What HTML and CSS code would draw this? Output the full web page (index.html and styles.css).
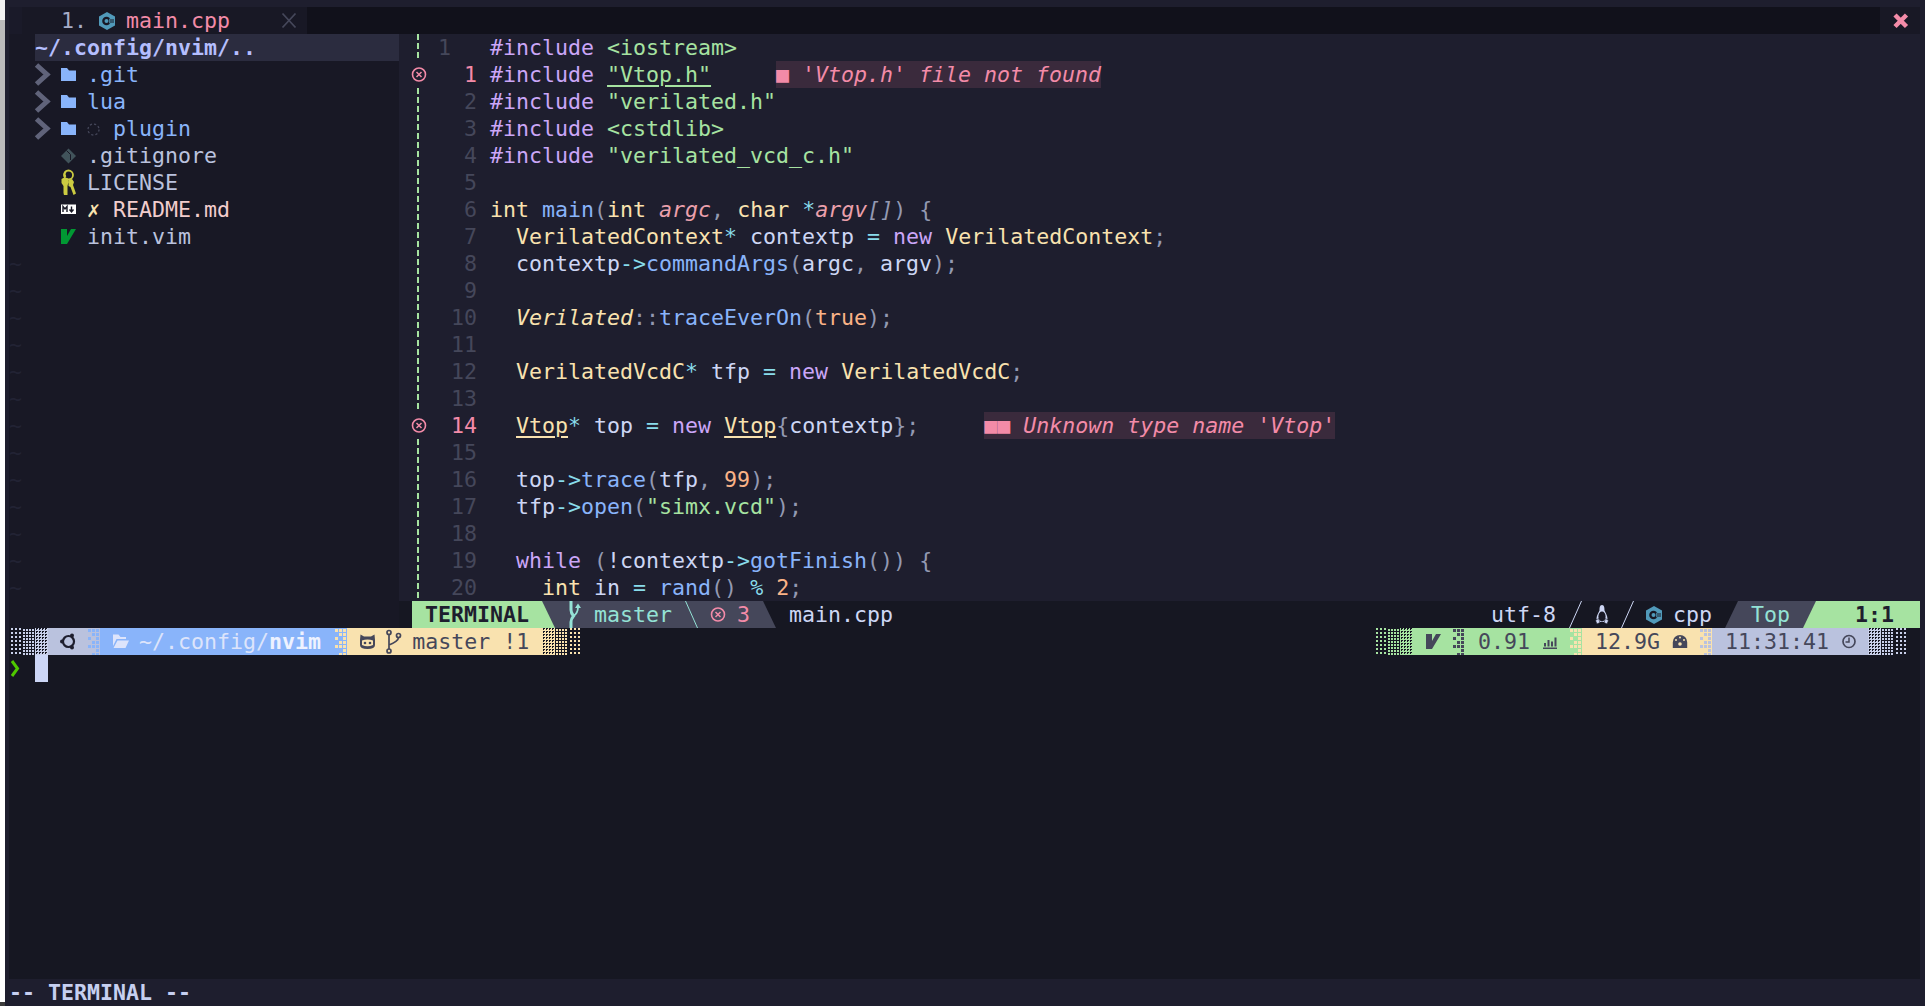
FILE: index.html
```html
<!DOCTYPE html>
<html lang="en">
<head>
<meta charset="utf-8">
<title>nvim</title>
<link rel="stylesheet" href="styles.css">
</head>
<body>
<svg class="defs" aria-hidden="true">
  <symbol id="chev" viewBox="0 0 13 27"><path d="M1.500 4 L12 13.500 L1.500 23" fill="none" stroke="currentColor" stroke-width="5"/></symbol>
  <symbol id="folder" viewBox="0 0 13 27"><path d="M0 7 H6 L8 9.500 H15 V20 H0Z" fill="currentColor"/></symbol>
  <symbol id="folderopen" viewBox="0 0 13 27"><path d="M0 6.500 H5.500 L7.500 9 H13 V11 H3.500 L0 18Z M4.500 12.500 H16 L12.500 20 H0.500Z" fill="currentColor"/></symbol>
  <symbol id="dashc" viewBox="0 0 13 27"><circle cx="6.500" cy="14.500" r="5.500" fill="none" stroke="currentColor" stroke-width="1.300" stroke-dasharray="2.200 2.100"/></symbol>
  <symbol id="gitd" viewBox="0 0 13 27"><path d="M7.500 6.500 L15 14 L7.500 21.500 L0 14Z" fill="currentColor"/><path d="M5.500 8.500 L9.500 12.500 V18" fill="none" stroke="#181825" stroke-width="1"/></symbol>
  <symbol id="keys" viewBox="0 0 13 27"><g fill="none" stroke="currentColor" stroke-width="1.800"><circle cx="7.500" cy="6" r="4.500"/><path d="M4.500 8 Q2.500 5 5 2"/></g><path d="M.500 10 Q3 8 6.500 9 L7.500 13 L6.500 17 V26 H3 L2.500 24 V17 L.500 14Z M7.500 11 L11 10 L13 13 L12 16 L15 24.500 L12.500 26 L9.500 18 L7.500 17Z" fill="currentColor"/></symbol>
  <symbol id="md" viewBox="0 0 13 27"><path d="M0 8.500 H15 V18 H0Z" fill="currentColor"/><path d="M2 16 V10.500 L4 13 L6 10.500 V16 M10.500 10.500 V15 M8.500 13.500 L10.500 16 L12.500 13.500" fill="none" stroke="#181825" stroke-width="1.400"/></symbol>
  <symbol id="vim" viewBox="0 0 13 27"><path d="M0 6 H6 V13 L10 6 H15 L6 21 H0Z" fill="currentColor"/></symbol>
  <symbol id="cpp" viewBox="0 0 13 27"><path d="M7 5 L15 9.500 V18.500 L7 23 L-1 18.500 V9.500Z" fill="currentColor"/><circle cx="6.500" cy="14" r="4.300" fill="var(--hole)"/><circle cx="6.500" cy="14" r="2" fill="currentColor"/><path d="M9 11.800 H15 V16.200 H9Z" fill="currentColor"/><path d="M9.500 13 H14 M9.500 15 H14" stroke="var(--hole)" stroke-width="1.100"/></symbol>
  <symbol id="xc" viewBox="0 0 13 27"><circle cx="7" cy="13.500" r="6.500" fill="none" stroke="currentColor" stroke-width="1.600"/><path d="M4.500 11 L9.500 16 M9.500 11 L4.500 16" stroke="currentColor" stroke-width="1.500"/></symbol>
  <symbol id="close" viewBox="0 0 13 27"><path d="M.500 6.500 L13.500 20.500 M13.500 6.500 L.500 20.500" stroke="currentColor" stroke-width="1.800"/></symbol>
  <symbol id="bigx" viewBox="0 0 13 27"><path d="M2 8 L13.500 19.500 M13.500 8 L2 19.500" stroke="currentColor" stroke-width="4.500"/></symbol>
  <symbol id="fork" viewBox="0 0 13 27"><g fill="none" stroke="currentColor"><path d="M3 0 V9 Q3 12 5.500 15 Q3 18 3 21 V27" stroke-width="3"/><path d="M5.500 15 Q10 12 10 6" stroke-width="1.800"/></g><path d="M10 2.500 L13 7 H7Z" fill="currentColor"/></symbol>
  <symbol id="slash" viewBox="0 0 13 27"><path d="M.500 27 L12.500 0" stroke="currentColor" stroke-width="1"/></symbol>
  <symbol id="bslash" viewBox="0 0 13 27"><path d="M.500 0 L12.500 27" stroke="currentColor" stroke-width="1"/></symbol>
  <symbol id="tux" viewBox="0 0 13 27"><path d="M7 4 C4.500 4 4.500 7.500 4.500 9.500 C3 12.500 1.500 15 1.500 18 L3 21 H11 L12.500 18 C12.500 15 11 12.500 9.500 9.500 C9.500 7.500 9.500 4 7 4Z" fill="currentColor"/><ellipse cx="7" cy="15.500" rx="3.600" ry="5" fill="#181825"/><path d="M.500 19.500 L3.500 17.500 L5 21.500 L2 23Z M13.500 19.500 L10.500 17.500 L9 21.500 L12 23Z" fill="currentColor" stroke="#181825" stroke-width=".6"/></symbol>
  <symbol id="ubuntu" viewBox="0 0 13 27"><circle cx="7.500" cy="13.500" r="5.500" fill="none" stroke="currentColor" stroke-width="2.200"/><circle cx="1" cy="13.500" r="2" fill="currentColor"/><circle cx="11" cy="7.500" r="2" fill="currentColor"/><circle cx="11" cy="19.500" r="2" fill="currentColor"/></symbol>
  <symbol id="cat" viewBox="0 0 13 27"><path d="M.500 6.500 L4 8.500 H11 L14.500 6.500 L15 12 V17 Q15 21 7.500 21 Q0 21 0 17 V12Z" fill="currentColor"/><path d="M2 12.500 Q7.500 10.500 13 12.500 V17 Q7.500 19.500 2 17Z" fill="#f9e2af"/><circle cx="5" cy="15" r="1.300" fill="currentColor"/><circle cx="10" cy="15" r="1.300" fill="currentColor"/></symbol>
  <symbol id="branch" viewBox="0 0 13 27"><g fill="none" stroke="currentColor" stroke-width="1.700"><circle cx="3" cy="4.500" r="2"/><circle cx="3" cy="23" r="2"/><circle cx="12.500" cy="7.500" r="2"/><path d="M3 6.500 V21 M12.500 9.500 Q12.500 13 3 17"/></g></symbol>
  <symbol id="bars" viewBox="0 0 13 27"><path d="M0 19.500 H14 V21 H0Z M1 15 H3 V18.500 H1Z M4.500 12 H6.500 V18.500 H4.500Z M8 13.500 H10 V18.500 H8Z M11.500 9.500 H13.500 V18.500 H11.500Z" fill="currentColor"/></symbol>
  <symbol id="gauge" viewBox="0 0 13 27"><path d="M7 7 A7.200 7.200 0 0 1 14.200 14.200 V20 H-.200 V14.200 A7.200 7.200 0 0 1 7 7Z" fill="currentColor"/><g fill="#f9e2af"><circle cx="7" cy="9.500" r="1"/><circle cx="3" cy="12" r="1"/><circle cx="11" cy="12" r="1"/><circle cx="7" cy="16" r="1.800"/></g></symbol>
  <symbol id="clock" viewBox="0 0 13 27"><circle cx="7" cy="13.500" r="6" fill="none" stroke="currentColor" stroke-width="1.700"/><path d="M7 9.500 V14 H3.500" fill="none" stroke="currentColor" stroke-width="1.500"/></symbol>
  <symbol id="pix" viewBox="0 0 13 27"><path d="M1 1h3v3h-3z M5 1h3v3h-3z M9 1h3v3h-3z M5 5h3v3h-3z M9 5h3v3h-3z M1 9h3v3h-3z M9 9h3v3h-3z M5 13h3v3h-3z M9 13h3v3h-3z M1 17h3v3h-3z M5 17h3v3h-3z M9 17h3v3h-3z M9 21h3v3h-3z M5 25h3v2h-3z M9 25h3v2h-3z" fill="currentColor"/></symbol>
  <symbol id="arrow" viewBox="0 0 13 27"><path d="M3 6 L8.500 13.500 L3 21" fill="none" stroke="currentColor" stroke-width="3"/></symbol>
</svg>

<div class="edge"><i class="e1"></i><i class="e2"></i><i class="e3"></i><i class="e4"></i></div>

<div class="window">
  <div class="tabline">
    <div class="tab-lead"></div>
    <div class="tab"><span class="dim">   1. </span><svg class="ic teal"><use href="#cpp"/></svg> <span class="red">main.cpp</span>    <svg class="ic faint"><use href="#close"/></svg>  </div>
    <div class="tab-fill"></div>
    <div class="tab-close"><svg class="ic red"><use href="#bigx"/></svg></div>
  </div>

  <div class="split">
    <aside class="tree">
      <div class="row head">  ~/.config/nvim/..</div>
      <div class="row">  <svg class="ic chev"><use href="#chev"/></svg> <svg class="ic blue"><use href="#folder"/></svg> <span class="blue">.git</span></div>
      <div class="row">  <svg class="ic chev"><use href="#chev"/></svg> <svg class="ic blue"><use href="#folder"/></svg> <span class="blue">lua</span></div>
      <div class="row">  <svg class="ic chev"><use href="#chev"/></svg> <svg class="ic blue"><use href="#folder"/></svg> <svg class="ic faint"><use href="#dashc"/></svg> <span class="blue">plugin</span></div>
      <div class="row sub">    <svg class="ic gitc"><use href="#gitd"/></svg> .gitignore</div>
      <div class="row sub">    <svg class="ic keyc"><use href="#keys"/></svg> LICENSE</div>
      <div class="row sub">    <svg class="ic white"><use href="#md"/></svg> <span class="yel">✗</span> <span class="flam">README.md</span></div>
      <div class="row sub">    <svg class="ic vimc"><use href="#vim"/></svg> init.vim</div>
      <div class="row tilde">~</div><div class="row tilde">~</div><div class="row tilde">~</div><div class="row tilde">~</div><div class="row tilde">~</div><div class="row tilde">~</div><div class="row tilde">~</div><div class="row tilde">~</div><div class="row tilde">~</div><div class="row tilde">~</div><div class="row tilde">~</div><div class="row tilde">~</div><div class="row tilde">~</div>
    </aside>

    <section class="right">
      <div class="editor">
        <div class="line"><div class="sign dash"></div><div class="num cur">1</div><code class="code"><span class="k">#include</span> <span class="s">&lt;iostream&gt;</span></code></div>
        <div class="line"><div class="sign"><svg class="ic red"><use href="#xc"/></svg></div><div class="num err">1</div><code class="code"><span class="k">#include</span> <span class="s ug">"Vtop.h"</span><span class="virt-gap">     </span><span class="virt"><span class="sq">■</span> 'Vtop.h' file not found</span></code></div>
        <div class="line"><div class="sign dash"></div><div class="num">2</div><code class="code"><span class="k">#include</span> <span class="s">"verilated.h"</span></code></div>
        <div class="line"><div class="sign dash"></div><div class="num">3</div><code class="code"><span class="k">#include</span> <span class="s">&lt;cstdlib&gt;</span></code></div>
        <div class="line"><div class="sign dash"></div><div class="num">4</div><code class="code"><span class="k">#include</span> <span class="s">"verilated_vcd_c.h"</span></code></div>
        <div class="line"><div class="sign dash"></div><div class="num">5</div><code class="code"></code></div>
        <div class="line"><div class="sign dash"></div><div class="num">6</div><code class="code"><span class="t">int</span> <span class="f">main</span><span class="p">(</span><span class="t">int</span> <span class="a">argc</span><span class="p">,</span> <span class="t">char</span> <span class="o">*</span><span class="a">argv</span><span class="p it">[]</span><span class="p">)</span> <span class="p">{</span></code></div>
        <div class="line"><div class="sign dash"></div><div class="num">7</div><code class="code">  <span class="t">VerilatedContext</span><span class="o">*</span> contextp <span class="o">=</span> <span class="k">new</span> <span class="t">VerilatedContext</span><span class="p">;</span></code></div>
        <div class="line"><div class="sign dash"></div><div class="num">8</div><code class="code">  contextp<span class="o">-&gt;</span><span class="f">commandArgs</span><span class="p">(</span>argc<span class="p">,</span> argv<span class="p">);</span></code></div>
        <div class="line"><div class="sign dash"></div><div class="num">9</div><code class="code"></code></div>
        <div class="line"><div class="sign dash"></div><div class="num">10</div><code class="code">  <span class="t it">Verilated</span><span class="p">::</span><span class="f">traceEverOn</span><span class="p">(</span><span class="n">true</span><span class="p">);</span></code></div>
        <div class="line"><div class="sign dash"></div><div class="num">11</div><code class="code"></code></div>
        <div class="line"><div class="sign dash"></div><div class="num">12</div><code class="code">  <span class="t">VerilatedVcdC</span><span class="o">*</span> tfp <span class="o">=</span> <span class="k">new</span> <span class="t">VerilatedVcdC</span><span class="p">;</span></code></div>
        <div class="line"><div class="sign dash"></div><div class="num">13</div><code class="code"></code></div>
        <div class="line"><div class="sign"><svg class="ic red"><use href="#xc"/></svg></div><div class="num err">14</div><code class="code">  <span class="t uy">Vtop</span><span class="o">*</span> top <span class="o">=</span> <span class="k">new</span> <span class="t uy">Vtop</span><span class="p">{</span>contextp<span class="p">};</span><span class="virt-gap">     </span><span class="virt"><span class="sq">■■</span> Unknown type name 'Vtop'</span></code></div>
        <div class="line"><div class="sign dash"></div><div class="num">15</div><code class="code"></code></div>
        <div class="line"><div class="sign dash"></div><div class="num">16</div><code class="code">  top<span class="o">-&gt;</span><span class="f">trace</span><span class="p">(</span>tfp<span class="p">,</span> <span class="n">99</span><span class="p">);</span></code></div>
        <div class="line"><div class="sign dash"></div><div class="num">17</div><code class="code">  tfp<span class="o">-&gt;</span><span class="f">open</span><span class="p">(</span><span class="s">"simx.vcd"</span><span class="p">);</span></code></div>
        <div class="line"><div class="sign dash"></div><div class="num">18</div><code class="code"></code></div>
        <div class="line"><div class="sign dash"></div><div class="num">19</div><code class="code">  <span class="k">while</span> <span class="p">(</span>!contextp<span class="o">-&gt;</span><span class="f">gotFinish</span><span class="p">())</span> <span class="p">{</span></code></div>
        <div class="line"><div class="sign dash"></div><div class="num">20</div><code class="code">    <span class="t">int</span> in <span class="o">=</span> <span class="f">rand</span><span class="p">()</span> <span class="o">%</span> <span class="n">2</span><span class="p">;</span></code></div>
      </div>

      <div class="status">
        <div class="st-panel st-l">
          <div class="st-mode"> TERMINAL</div><span class="tl"> <svg class="ic"><use href="#fork"/></svg> master <svg class="ic"><use href="#bslash"/></svg> <svg class="ic red"><use href="#xc"/></svg> <span class="red">3</span></span>
        </div>
        <div class="st-file"> main.cpp</div>
        <div class="st-r">
          <div class="st-info">utf-8 <svg class="ic"><use href="#slash"/></svg> <svg class="ic"><use href="#tux"/></svg> <svg class="ic"><use href="#slash"/></svg> <svg class="ic teal"><use href="#cpp"/></svg> cpp </div>
          <div class="st-panel st-rp"><span class="tl">  Top</span><div class="st-pos">    1:1</div></div>
        </div>
      </div>
    </section>
  </div>

  <main class="terminal">
    <div class="pbar">
      <div class="pgroup">
        <i class="d d1 lav"></i><i class="d d2 lav"></i><i class="d d3 lav"></i>
        <div class="seg s-lav"> <svg class="ic ink"><use href="#ubuntu"/></svg> </div>
        <div class="seg s-lav"><svg class="ic c-blue"><use href="#pix"/></svg></div>
        <div class="seg s-blue"> <svg class="ic"><use href="#folderopen"/></svg> ~/.config/<b>nvim</b> </div>
        <div class="seg s-blue"><svg class="ic c-yel"><use href="#pix"/></svg></div>
        <div class="seg s-yel"> <svg class="ic"><use href="#cat"/></svg> <svg class="ic"><use href="#branch"/></svg> master !1 </div>
        <i class="d d3 yel-d"></i><i class="d d2 yel-d"></i><i class="d d1 yel-d"></i>
      </div>
      <div class="pgroup">
        <i class="d d1 grn"></i><i class="d d2 grn"></i><i class="d d3 grn"></i>
        <div class="seg s-grn"> <svg class="ic"><use href="#vim"/></svg> <svg class="ic"><use href="#pix"/></svg> 0.91 <svg class="ic"><use href="#bars"/></svg> </div>
        <div class="seg s-grn"><svg class="ic c-yel"><use href="#pix"/></svg></div>
        <div class="seg s-yel"> 12.9G <svg class="ic"><use href="#gauge"/></svg> </div>
        <div class="seg s-yel"><svg class="ic c-lav"><use href="#pix"/></svg></div>
        <div class="seg s-lav"> 11:31:41 <svg class="ic"><use href="#clock"/></svg> </div>
        <i class="d d3 lav"></i><i class="d d2 lav"></i><i class="d d1 lav"></i>
      </div>
    </div>
    <div class="prompt"><svg class="ic caret"><use href="#arrow"/></svg><span class="cursor"></span></div>
  </main>

  <footer class="cmdline">-- TERMINAL --</footer>
</div>
</body>
</html>
```
FILE: styles.css
```css
* { box-sizing: border-box; }

html, body {
  margin: 0;
  height: 100%;
  overflow: hidden;
}

body {
  display: flex;
  height: 1006px;
  background: #fff;
  color: #cdd6f4;
  font: 21.6px/27px "DejaVu Sans Mono", "Liberation Mono", monospace;
}

.tab, .row, .code, .st-mode, .tl, .st-file, .st-info, .st-pos, .seg, .cmdline {
  white-space: pre;
}

.defs { display: none; }
symbol { overflow: visible; }

.ic {
  display: inline-block;
  width: 13px;
  height: 27px;
  vertical-align: top;
  overflow: visible;
  --hole: #181825;
}

/* screen behind the terminal */
.edge { width: 5px; display: flex; flex-direction: column; flex: none; }
.edge i { display: block; }
.e1 { height: 20px; background: #f2f2f2; }
.e2 { height: 170px; background: #bbb; }
.e3 { flex: 1; background: #fff; }
.e4 { height: 4px; background: #3c3c3c; }

.window {
  flex: 1;
  min-width: 0;
  display: flex;
  flex-direction: column;
  padding: 7px 5px 0 4px;
  background: #1e1e2e;
}

/* tab line */
.tabline { display: flex; height: 27px; flex: none; }
.tab-lead { width: 13px; background: #1a1a29; }
.tab { width: 285px; background: #181825; }
.tab-fill { flex: 1; background: #11111b; }
.tab-close { width: 40px; padding-left: 13px; background: #181825; }
.dim { color: #a6adc8; }
.teal { color: #519aba; }
.red { color: #f38ba8; }
.faint { color: #45475a; }
.blue { color: #89b4fa; }
.yel { color: #f9e2af; }
.flam { color: #f2cdcd; }
.chev { color: #60637a; }
.gitc { color: #41535b; }
.keyc { color: #cbcb41; }
.white { color: #fff; }
.vimc { color: #019833; }
.ink { color: #1e1e2e; }

.split {
  display: grid;
  grid-template-columns: 390px 1fr;
  height: 594px;
  flex: none;
}

/* file tree */
.tree { background: #181825; overflow: hidden; }
.row { height: 27px; }
.head { font-weight: bold; color: #b4befe; background: linear-gradient(90deg, transparent 26px, #2b2c3f 26px); }
.sub { color: #bac2de; }
.tilde { color: #222334; }

/* editor */
.right { display: flex; flex-direction: column; min-width: 0; }
.editor { height: 567px; padding-left: 13px; flex: none; overflow: hidden; }
.line { display: flex; height: 27px; }
.sign { width: 26px; flex: none; }
.dash {
  background: repeating-linear-gradient(180deg, #a6e3a1 0 6px, transparent 6px 9px) 5px 0 / 2px 100% no-repeat;
}
.num { width: 39px; flex: none; text-align: right; color: #45475a; }
.num.cur { text-align: left; }
.num.err { color: #f38ba8; }
.code { font: inherit; padding-left: 13px; color: #cdd6f4; }
.k { color: #cba6f7; }
.s { color: #a6e3a1; }
.t { color: #f9e2af; }
.f { color: #89b4fa; }
.p { color: #9399b2; }
.o { color: #89dceb; }
.n { color: #fab387; }
.a { color: #eba0ac; font-style: italic; }
.it { font-style: italic; }
.ug { text-decoration: underline #a6e3a1 2px; text-underline-offset: 3px; }
.uy { text-decoration: underline #f9e2af 2px; text-underline-offset: 3px; }
.virt {
  display: inline-block;
  height: 27px;
  background: #3a2a3c;
  color: #f38ba8;
  font-style: italic;
}
.sq { font-style: normal; color: #f38ba8; }

/* editor status line */
.status {
  display: flex;
  height: 27px;
  flex: none;
  padding-left: 13px;
  background: #161722;
}
.st-panel { position: relative; background: #45475a; }
.st-l {
  display: flex;
  width: 364px;
  flex: none;
  clip-path: polygon(0 0, 351px 0, 100% 100%, 0 100%);
}
.st-mode {
  width: 143px;
  flex: none;
  background: #a6e3a1;
  color: #1e1e2e;
  font-weight: bold;
  clip-path: polygon(0 0, 130px 0, 100% 100%, 0 100%);
}
.tl { color: #94e2d5; }
.tl .ic { --hole: #45475a; }
.st-r { display: flex; margin-left: auto; }
.st-rp {
  display: flex;
  width: 195px;
  clip-path: polygon(13px 0, 100% 0, 100% 100%, 0 100%);
}
.st-pos {
  position: absolute;
  top: 0;
  right: 0;
  width: 117px;
  height: 27px;
  background: #a6e3a1;
  color: #1e1e2e;
  font-weight: bold;
  clip-path: polygon(13px 0, 100% 0, 100% 100%, 0 100%);
}

/* terminal */
.terminal { flex: 1; background: #161722; }
.pbar { display: flex; justify-content: space-between; height: 27px; padding-right: 13px; }
.pgroup { display: flex; }
.seg { height: 27px; }
.s-lav { background: #bac2de; color: #45475a; }
.s-blue { background: #89b4fa; color: #dde4fb; }
.s-blue b { color: #eef2ff; }
.s-yel { background: #f9e2af; color: #45475a; }
.s-grn { background: #a6e3a1; color: #45475a; }
.c-blue { color: #89b4fa; }
.c-yel { color: #f9e2af; }
.c-lav { color: #bac2de; }
.d { display: block; width: 13px; height: 27px; flex: none; }
.lav { --fg: #c9d0ea; --bg: #161722; }
.yel-d { --fg: #f9e2af; --bg: #161722; }
.grn { --fg: #a6e3a1; --bg: #161722; }
.d1 { background: repeating-conic-gradient(var(--fg) 0 25%, transparent 0 100%) 0 0 / 4px 4px; }
.d2 {
  background:
    repeating-linear-gradient(90deg, var(--bg) 0 1px, transparent 1px 3px),
    repeating-linear-gradient(180deg, var(--bg) 0 1px, transparent 1px 3px),
    var(--fg);
}
.d3 { background: repeating-conic-gradient(var(--bg) 0 25%, var(--fg) 0 100%) 0 0 / 3px 3px; }

.prompt { height: 27px; display: flex; }
.caret { color: #4fc800; }
.cursor { display: block; width: 13px; height: 27px; margin-left: 13px; background: #ccd6f6; }

.cmdline {
  height: 27px;
  flex: none;
  font-weight: bold;
  color: #c6cff0;
  background: #1e1e2e;
}
```
